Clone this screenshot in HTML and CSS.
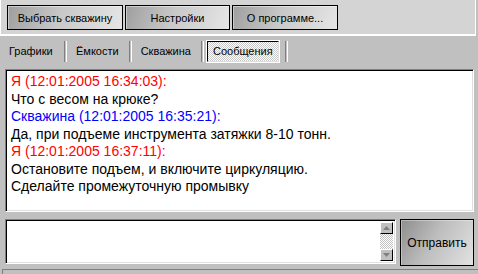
FILE: index.html
```html
<!DOCTYPE html>
<html lang="ru">

<head>
  <meta charset="UTF-8">
  <title>Сообщения</title>
  <link rel="stylesheet" href="styles.css">
</head>

<body>
  <!-- Toolbar -->
  <div class="toolbar">
    <button class="tool-btn btn-well">Выбрать скважину</button>
    <button class="tool-btn btn-settings">Настройки</button>
    <button class="tool-btn btn-about">О программе...</button>
  </div>

  <!-- Tabs -->
  <div class="tabs">
    <span class="tab">Графики</span>
    <span class="sep"></span>
    <span class="tab">Ёмкости</span>
    <span class="sep"></span>
    <span class="tab">Скважина</span>
    <span class="sep"></span>
    <span class="tab active">Сообщения</span>
    <span class="sep"></span>
  </div>

  <!-- Messages -->
  <div class="messages">
    <div class="me">Я (12:01:2005 16:34:03):</div>
    <div>Что с весом на крюке?</div>
    <div class="well">Скважина (12:01:2005 16:35:21):</div>
    <div>Да, при подъеме инструмента затяжки 8-10 тонн.</div>
    <div class="me">Я (12:01:2005 16:37:11):</div>
    <div>Остановите подъем, и включите циркуляцию.</div>
    <div>Сделайте промежуточную промывку</div>
  </div>

  <div class="compose">
    <div class="input-box">
      <div class="input-text"></div>
      <div class="scrollbar">
        <div class="scroll-btn">
          <svg width="7" height="4" viewBox="0 0 7 4"><path d="M3.5 0 L7 4 L0 4 Z" fill="#808080"/></svg>
        </div>
        <div class="scroll-track"></div>
        <div class="scroll-btn">
          <svg width="7" height="4" viewBox="0 0 7 4"><path d="M0 0 L7 0 L3.5 4 Z" fill="#808080"/></svg>
        </div>
      </div>
    </div>
    <button class="send-btn">Отправить</button>
  </div>

  <div class="statusbar"></div>
</body>

</html>
```
FILE: styles.css
```css
/* CSS styles */
body {
  margin: 0;
  padding: 0;
  width: 478px;
  height: 274px;
  overflow: hidden;
  background-color: #c0c0c0;
  font-family: "Liberation Sans", Arial, sans-serif;
}

.toolbar {
  box-sizing: border-box;
  width: 476px;
  height: 36px;
  background-color: #d4d4d4;
  border-left: 1px solid #fff;
  border-right: 1px solid #fff;
  border-bottom: 2px solid #fff;
  padding: 5px 0 0 6px;
  display: flex;
  gap: 2px;
}

.tool-btn {
  box-sizing: border-box;
  height: 25px;
  border: 1px solid #000;
  background: linear-gradient(110deg, #9e9e9e 0%, #c8c8c8 45%, #e6e6e6 100%);
  box-shadow: inset 1px 1px 0 rgba(255, 255, 255, 0.45);
  font-family: "Liberation Sans", Arial, sans-serif;
  font-size: 11px;
  color: #000;
  padding: 0;
}

.btn-well {
  width: 116px;
}

.btn-settings {
  width: 105px;
}

.btn-about {
  width: 106px;
}

.tabs {
  box-sizing: border-box;
  height: 33px;
  padding-top: 5px;
  display: flex;
  align-items: flex-start;
  font-size: 11px;
}

.tab {
  box-sizing: border-box;
  height: 21px;
  line-height: 21px;
  padding: 0 10px 0 9px;
}

.tab:first-child {
  width: 64px;
}

.sep {
  width: 1px;
  height: 21px;
  border-left: 1px solid #808080;
  border-right: 1px solid #fff;
}

.tab.active {
  margin: 0 6px 0 3px;
  padding: 0 5px;
  line-height: 19px;
  border: 1px solid;
  border-color: #000 #dfdfdf #dfdfdf #000;
  box-shadow: 0 0 0 1px #fff;
  background: repeating-conic-gradient(#fff 0 25%, #c8c8c8 0 50%) 0 0 / 2px 2px;
}

.messages {
  box-sizing: border-box;
  margin: 0 4px 0 5px;
  height: 143px;
  padding: 3px 5px;
  background-color: #fff;
  border: 1px solid;
  border-color: #808080 #fff #fff #808080;
  box-shadow: inset 1px 1px 0 #000, inset -1px -1px 0 #dfdfdf;
  font-size: 14px;
  line-height: 17.5px;
  color: #000;
}

.me {
  color: #ff0000;
}

.well {
  color: #0000ff;
}

.compose {
  display: flex;
  gap: 4px;
  margin: 7px 4px 0 5px;
  height: 47px;
}

.input-box {
  box-sizing: border-box;
  width: 391px;
  height: 45px;
  display: flex;
  padding: 2px;
  background-color: #fff;
  border: 1px solid;
  border-color: #808080 #fff #fff #808080;
  box-shadow: inset 1px 1px 0 #000, inset -1px -1px 0 #dfdfdf;
}

.input-text {
  flex: 1;
}

.scrollbar {
  width: 13px;
  display: flex;
  flex-direction: column;
}

.scroll-btn {
  box-sizing: border-box;
  height: 12px;
  display: flex;
  align-items: center;
  justify-content: center;
  background-color: #c0c0c0;
  border: 1px solid;
  border-color: #fff #000 #000 #fff;
}

.scroll-track {
  flex: 1;
  background: repeating-conic-gradient(#fff 0 25%, #c0c0c0 0 50%) 0 0 / 2px 2px;
}

.send-btn {
  box-sizing: border-box;
  width: 74px;
  height: 47px;
  border: 1px solid #000;
  background: linear-gradient(120deg, #8e8e8e 0%, #bdbdbd 45%, #e2e2e2 100%);
  box-shadow: inset 1px 1px 0 rgba(255, 255, 255, 0.35);
  font-family: "Liberation Sans", Arial, sans-serif;
  font-size: 12px;
  color: #000;
  padding: 0;
}

.statusbar {
  margin-top: 3px;
  border-top: 1px solid #808080;
  border-left: 1px solid #808080;
  height: 4px;
  margin-left: 2px;
  background-color: #c0c0c0;
}
```
